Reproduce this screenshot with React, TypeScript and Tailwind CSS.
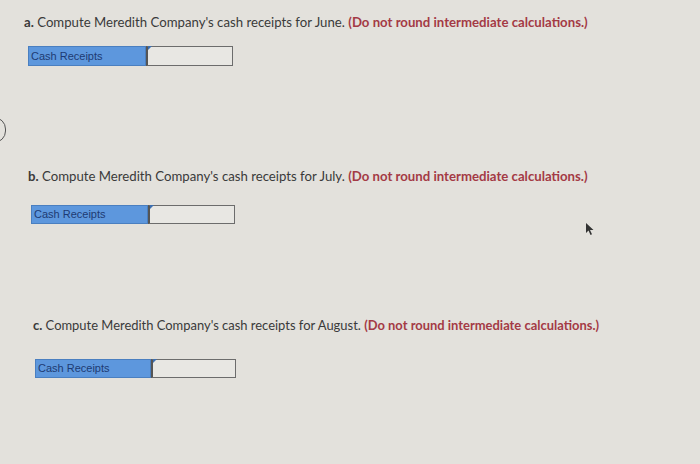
export default function App() {
  const parts = [
    { letter: "a.", month: "June", top: "pt-[13px]", pl: "pl-[24px]", boxPl: "pl-[28px]", gap: "mt-[15px]", h: "h-[20px]", size: "text-[13.2px]", lw: "w-[118px]", iw: "w-[87px]" },
    { letter: "b.", month: "July", top: "pt-[101px]", pl: "pl-[28px]", boxPl: "pl-[31px]", gap: "mt-[20px]", h: "h-[19px]", size: "text-[13.2px]", lw: "w-[117px]", iw: "w-[87px]" },
    { letter: "c.", month: "August", top: "pt-[92px]", pl: "pl-[33px]", boxPl: "pl-[35px]", gap: "mt-[25px]", h: "h-[19px]", size: "text-[12.95px]", lw: "w-[116px]", iw: "w-[85px]" },
  ];

  return (
    <div className="relative w-[700px] h-[464px] overflow-hidden bg-[#e3e1dc] font-['Lato',sans-serif] text-[#3a3a3a]">
      {/* edge of something cut off at left */}
      <div className="absolute -left-[18px] top-[117px] w-[24px] h-[26px] rounded-full border-[1.5px] border-[#555]" />

      {parts.map((p) => (
        <div key={p.letter} className={p.top}>
          <p className={`${p.pl} ${p.size} leading-[18px] whitespace-nowrap`}>
            <span className="font-bold">{p.letter}</span> Compute Meredith Company's cash receipts for {p.month}.{" "}
            <span className="font-bold text-[#a43a45]">(Do not round intermediate calculations.)</span>
          </p>
          <div className={`${p.boxPl} ${p.gap} flex`}>
            <div className={`${p.lw} ${p.h} bg-[#5d97dd] border border-[#4a7fc0] flex items-center px-[2px] text-[11px] text-[#1d3b73] font-['Liberation_Sans',sans-serif]`}>
              Cash Receipts
            </div>
            <div className={`relative ${p.iw} ${p.h} bg-[#e8e7e3] border border-[#6c6c6c] border-l-2 border-l-[#555]`}>
              <div className="absolute -top-[1px] left-0 w-0 h-0 border-t-[4px] border-t-[#3d6fb0] border-r-[4px] border-r-transparent" />
            </div>
          </div>
        </div>
      ))}

      {/* mouse pointer */}
      <svg className="absolute left-[585px] top-[222px]" width="10" height="14" viewBox="0 0 10 14">
        <path d="M1 1 L1 11 L3.5 8.5 L5.5 13 L7 12.3 L5 8 L8.5 8 Z" fill="#333" />
      </svg>
    </div>
  );
}
